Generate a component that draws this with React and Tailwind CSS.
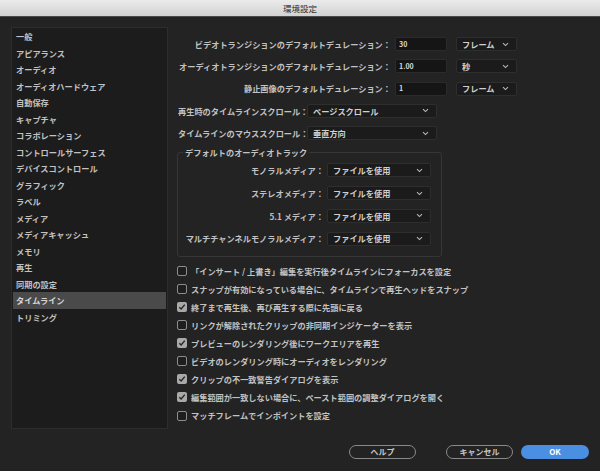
import React from "react";

const font = {
  fontFamily: '"Noto Sans CJK JP", "Noto Sans", sans-serif',
};

const sidebarItems = [
  "一般",
  "アピアランス",
  "オーディオ",
  "オーディオハードウェア",
  "自動保存",
  "キャプチャ",
  "コラボレーション",
  "コントロールサーフェス",
  "デバイスコントロール",
  "グラフィック",
  "ラベル",
  "メディア",
  "メディアキャッシュ",
  "メモリ",
  "再生",
  "同期の設定",
  "タイムライン",
  "トリミング",
];

const checks = [
  { label: "「インサート / 上書き」編集を実行後タイムラインにフォーカスを設定", on: false },
  { label: "スナップが有効になっている場合に、タイムラインで再生ヘッドをスナップ", on: false },
  { label: "終了まで再生後、再び再生する際に先頭に戻る", on: true },
  { label: "リンクが解除されたクリップの非同期インジケーターを表示", on: false },
  { label: "プレビューのレンダリング後にワークエリアを再生", on: true },
  { label: "ビデオのレンダリング時にオーディオをレンダリング", on: false },
  { label: "クリップの不一致警告ダイアログを表示", on: true },
  { label: "編集範囲が一致しない場合に、ペースト範囲の調整ダイアログを開く", on: true },
  { label: "マッチフレームでインポイントを設定", on: false },
];

const audioTracks = [
  "モノラルメディア：",
  "ステレオメディア：",
  "5.1 メディア：",
  "マルチチャンネルモノラルメディア：",
];

const Chevron = () => (
  <svg width="7" height="5" viewBox="0 0 7 5" className="shrink-0">
    <path d="M1 1.2 L3.5 3.6 L6 1.2" fill="none" stroke="#b8b8b8" strokeWidth="1.1" />
  </svg>
);

const Select = ({ value, className }) => (
  <div
    className={`flex items-center justify-between h-[14px] pl-[5px] pr-[7px] bg-[#1b1b1b] border border-[#2e2e2e] rounded-[2px] text-[#cfcfcf] ${className}`}
  >
    <span>{value}</span>
    <Chevron />
  </div>
);

const NumInput = ({ value }) => (
  <div className="flex items-center w-[52px] h-[14px] pl-[3px] bg-[#151515] border border-[#2b2b2b] rounded-[2px] text-[7px] text-[#dcdcdc]">
    {value}
  </div>
);

const Checkbox = ({ on }) =>
  on ? (
    <div className="w-[10px] h-[10px] rounded-[2px] bg-[#a9a9a9] flex items-center justify-center shrink-0">
      <svg width="8" height="8" viewBox="0 0 8 8">
        <path d="M1.3 4.2 L3.1 6 L6.8 1.6" fill="none" stroke="#262626" strokeWidth="1.4" />
      </svg>
    </div>
  ) : (
    <div className="w-[10px] h-[10px] rounded-[2px] border-[1.5px] border-[#8d8d8d] bg-[#1e1e1e] shrink-0" />
  );

const App = () => {
  const durationRows = [
    { label: "ビデオトランジションのデフォルトデュレーション：", value: "30", unit: "フレーム" },
    { label: "オーディオトランジションのデフォルトデュレーション：", value: "1.00", unit: "秒" },
    { label: "静止画像のデフォルトデュレーション：", value: "1", unit: "フレーム" },
  ];

  return (
    <div
      className="w-[600px] h-[471px] bg-[#232323] text-[#c2c2c2] text-[8.2px] font-bold overflow-hidden flex flex-col"
      style={font}
    >
      {/* Title bar */}
      <div className="h-[17px] shrink-0 bg-gradient-to-b from-[#ebebeb] to-[#d2d2d2] border-b border-[#4a4a4a] flex items-center justify-center text-[#2e2e2e] font-normal text-[8.5px]">
        環境設定
      </div>

      <div className="flex flex-1">
        {/* Sidebar */}
        <div className="ml-[11px] mt-[10px] w-[157px] h-[402px] bg-[#1c1c1c] border border-[#2d2d2d] px-[1px] shrink-0">
          {sidebarItems.map((item) => (
            <div
              key={item}
              className={`h-[16.5px] flex items-center pl-[3px] ${
                item === "タイムライン" ? "bg-[#4a4a4a] text-[#d6d6d6]" : ""
              }`}
            >
              {item}
            </div>
          ))}
        </div>

        {/* Right panel */}
        <div className="ml-[9px] flex-1 flex flex-col pt-[20px]">
          <div className="flex flex-col gap-[8.3px]">
            {durationRows.map((row) => (
              <div key={row.label} className="flex items-center h-[14px]">
                <div className="w-[214px] text-right whitespace-nowrap">{row.label}</div>
                <div className="ml-[4px]">
                  <NumInput value={row.value} />
                </div>
                <Select value={row.unit} className="ml-[9px] w-[61px]" />
              </div>
            ))}
            <div className="flex items-center h-[14px]">
              <div className="w-[130px] pl-[1px] whitespace-nowrap">再生時のタイムラインスクロール：</div>
              <Select value="ページスクロール" className="w-[130px]" />
            </div>
            <div className="flex items-center h-[14px]">
              <div className="w-[130px] pl-[1px] whitespace-nowrap">タイムラインのマウススクロール：</div>
              <Select value="垂直方向" className="w-[130px]" />
            </div>
          </div>

          {/* Default audio tracks */}
          <fieldset className="mt-[7px] w-[265px] border border-[#363636] rounded-[3px] pb-[10px]">
            <legend className="ml-[5px] px-[2px] leading-[11px]">デフォルトのオーディオトラック</legend>
            <div className="flex flex-col gap-[8.2px] mt-[5px]">
              {audioTracks.map((t) => (
                <div key={t} className="flex items-center h-[14.5px]">
                  <div className="w-[146px] text-right whitespace-nowrap">{t}</div>
                  <Select value="ファイルを使用" className="ml-[3px] w-[104px] h-[14.5px]" />
                </div>
              ))}
            </div>
          </fieldset>

          {/* Checkboxes */}
          <div className="mt-[5px] flex flex-col">
            {checks.map((c) => (
              <div key={c.label} className="flex items-center h-[18.1px]">
                <Checkbox on={c.on} />
                <span className="ml-[4px] whitespace-nowrap">{c.label}</span>
              </div>
            ))}
          </div>
        </div>
      </div>

      {/* Buttons */}
      <div className="h-[42px] shrink-0 flex items-start justify-end pr-[11px] pt-[16px] font-bold">
        <button className="w-[67px] h-[14px] rounded-full border border-[#8a8a8a] text-[#c8c8c8] text-[8px] flex items-center justify-center">
          ヘルプ
        </button>
        <button className="ml-[30px] w-[67px] h-[14px] rounded-full border border-[#8a8a8a] text-[#c8c8c8] text-[8px] flex items-center justify-center">
          キャンセル
        </button>
        <button className="ml-[8px] w-[68px] h-[14px] rounded-full bg-[#4a8fe2] text-white text-[8px] flex items-center justify-center">
          OK
        </button>
      </div>
    </div>
  );
};

export default App;
